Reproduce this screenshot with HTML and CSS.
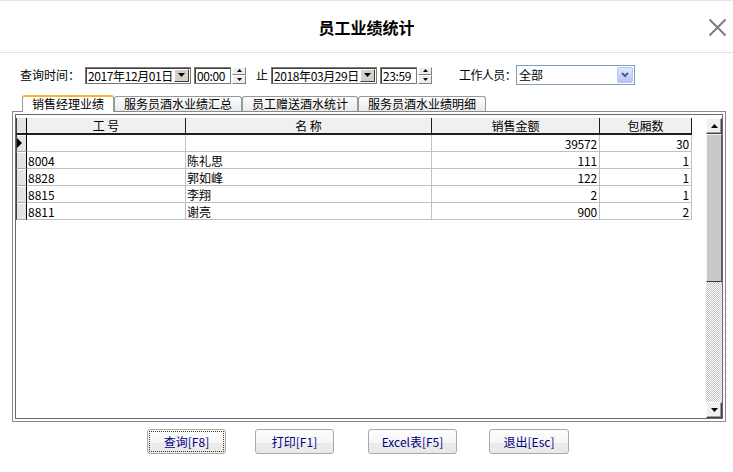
FILE: index.html
```html
<!DOCTYPE html>
<html lang="zh-CN">
<head>
<meta charset="utf-8">
<title>员工业绩统计</title>
<link rel="stylesheet" href="styles.css">
</head>
<body>
<div class="window">
  <header class="titlebar">
    <h1 class="title">员工业绩统计</h1>
    <span class="close" aria-label="关闭">
      <svg width="19" height="19" viewBox="0 0 19 19"><path d="M1.5 1.5 L17.5 17.5 M17.5 1.5 L1.5 17.5" stroke="#7d7d7d" stroke-width="2" fill="none"/></svg>
    </span>
  </header>

  <div class="query">
    <span class="label">查询时间：</span>
    <div class="datebox date-from">
      <span class="val">2017年12月01日</span>
      <span class="dd-btn"><svg width="7" height="4" viewBox="0 0 7 4"><path d="M0 0 H7 L3.5 4 Z" fill="#000"/></svg></span>
    </div>
    <div class="timebox"><span class="val">00:00</span></div>
    <div class="spin">
      <span class="half"><svg width="5" height="3" viewBox="0 0 5 3"><path d="M0 3 H5 L2.5 0 Z" fill="#000"/></svg></span>
      <span class="half"><svg width="5" height="3" viewBox="0 0 5 3"><path d="M0 0 H5 L2.5 3 Z" fill="#000"/></svg></span>
    </div>
    <span class="label to">止</span>
    <div class="datebox date-to">
      <span class="val">2018年03月29日</span>
      <span class="dd-btn"><svg width="7" height="4" viewBox="0 0 7 4"><path d="M0 0 H7 L3.5 4 Z" fill="#000"/></svg></span>
    </div>
    <div class="timebox"><span class="val">23:59</span></div>
    <div class="spin">
      <span class="half"><svg width="5" height="3" viewBox="0 0 5 3"><path d="M0 3 H5 L2.5 0 Z" fill="#000"/></svg></span>
      <span class="half"><svg width="5" height="3" viewBox="0 0 5 3"><path d="M0 0 H5 L2.5 3 Z" fill="#000"/></svg></span>
    </div>
    <span class="label staff">工作人员：</span>
    <div class="select">
      <span class="sel-val">全部</span>
      <span class="sel-btn"><svg width="8" height="6" viewBox="0 0 8 6"><path d="M1 1 L4 4 L7 1" stroke="#4d6185" stroke-width="2" fill="none"/></svg></span>
    </div>
  </div>

  <nav class="tabs">
    <span class="tab active">销售经理业绩</span>
    <span class="tab">服务员酒水业绩汇总</span>
    <span class="tab">员工赠送酒水统计</span>
    <span class="tab">服务员酒水业绩明细</span>
  </nav>

  <section class="panel">
    <div class="grid">
      <div class="table-wrap">
        <table class="data">
          <colgroup>
            <col class="c-ind"><col class="c-id"><col class="c-name"><col class="c-amt"><col class="c-room">
          </colgroup>
          <thead>
            <tr><th class="ind"></th><th>工 号</th><th>名 称</th><th>销售金额</th><th>包厢数</th></tr>
          </thead>
          <tbody>
            <tr><td class="ind cur"><svg width="5" height="10" viewBox="0 0 5 10"><path d="M0 0 L5 5 L0 10 Z" fill="#000"/></svg></td><td></td><td></td><td class="num">39572</td><td class="num">30</td></tr>
            <tr><td class="ind"></td><td>8004</td><td>陈礼思</td><td class="num">111</td><td class="num">1</td></tr>
            <tr><td class="ind"></td><td>8828</td><td>郭如峰</td><td class="num">122</td><td class="num">1</td></tr>
            <tr><td class="ind"></td><td>8815</td><td>李翔</td><td class="num">2</td><td class="num">1</td></tr>
            <tr><td class="ind"></td><td>8811</td><td>谢亮</td><td class="num">900</td><td class="num">2</td></tr>
          </tbody>
        </table>
      </div>
      <div class="scrollbar">
        <span class="sb-btn"><svg width="7" height="4" viewBox="0 0 7 4"><path d="M0 4 H7 L3.5 0 Z" fill="#000"/></svg></span>
        <span class="sb-thumb"></span>
        <span class="sb-track"></span>
        <span class="sb-btn"><svg width="7" height="4" viewBox="0 0 7 4"><path d="M0 0 H7 L3.5 4 Z" fill="#000"/></svg></span>
      </div>
    </div>
  </section>

  <div class="buttons">
    <button class="btn btn-query focused">查询[F8]</button>
    <button class="btn btn-print">打印[F1]</button>
    <button class="btn btn-excel">Excel表[F5]</button>
    <button class="btn btn-exit">退出[Esc]</button>
  </div>
</div>
</body>
</html>
```

FILE: styles.css
```css
* { box-sizing: border-box; }
html, body { margin: 0; padding: 0; }
body {
  width: 733px;
  height: 472px;
  overflow: hidden;
  background: #fff;
  color: #000;
  font: 12px/14px "Noto Sans CJK SC", "Liberation Sans", sans-serif;
}

/* title bar */
.titlebar {
  height: 53px;
  border-top: 1px solid #e6e6e6;
  border-bottom: 1px solid #e3e3e3;
  display: grid;
  grid-template-columns: 1fr auto 1fr;
  align-items: center;
}
.title {
  grid-column: 2;
  margin: 0;
  font-size: 16px;
  font-weight: bold;
  line-height: 20px;
}
.close {
  grid-column: 3;
  justify-self: end;
  width: 19px;
  height: 19px;
  margin-right: 6px;
  margin-top: 2px;
  display: block;
}
.close svg { display: block; }

/* query row */
.query {
  margin-top: 12px;
  height: 20px;
  padding-left: 20px;
  display: flex;
  align-items: center;
}
.label { line-height: 20px; white-space: nowrap; }
.label.to { margin-left: 10px; }
.label.staff { margin-left: 27px; letter-spacing: -0.6px; }

.datebox, .timebox {
  height: 17px;
  border: 1px solid #7a7a7a;
  box-shadow: inset 1px 1px 0 #404040;
  background: #fff;
  display: flex;
  align-items: center;
}
.datebox { width: 106px; margin-left: 3px; }
.date-from { margin-left: 5px; }
.datebox .val, .timebox .val {
  flex: 1;
  padding-left: 2px;
  line-height: 15px;
  letter-spacing: -0.4px;
  white-space: nowrap;
  overflow: hidden;
}
.dd-btn {
  width: 15px;
  height: 13px;
  margin-right: 1px;
  background: #d4d0c8;
  border: 1px solid;
  border-color: #fff #404040 #404040 #fff;
  display: flex;
  align-items: center;
  justify-content: center;
}
.dd-btn svg { display: block; }
.timebox { width: 37px; margin-left: 3px; }
.spin {
  width: 14px;
  height: 17px;
  margin-left: 1px;
  display: flex;
  flex-direction: column;
}
.spin .half {
  height: 8.5px;
  background: #ededed;
  border: 1px solid;
  border-color: #fff #808080 #808080 #fff;
  display: flex;
  align-items: center;
  justify-content: center;
}
.spin svg { display: block; }

.select {
  width: 119px;
  height: 20px;
  margin-left: 0;
  border: 1px solid #7f9db9;
  background: #fff;
  display: flex;
  align-items: center;
}
.sel-val { flex: 1; padding-left: 2px; line-height: 16px; }
.sel-btn {
  width: 16px;
  height: 16px;
  margin-right: 1px;
  border: 1px solid #b6c6ef;
  border-radius: 2px;
  background: linear-gradient(#e0e8fd, #b3c5f5);
  display: flex;
  align-items: center;
  justify-content: center;
}
.sel-btn svg { display: block; }

/* tabs */
.tabs {
  margin-top: 10px;
  margin-left: 22px;
  height: 16px;
  display: flex;
  align-items: flex-end;
}
.tab {
  height: 15px;
  padding: 0 9px;
  border: 1px solid #919b9c;
  border-bottom: none;
  border-radius: 3px 3px 0 0;
  background: linear-gradient(#fdfdfd, #eaeaea);
  line-height: 14px;
  white-space: nowrap;
}
.tab.active {
  height: 17px;
  margin-bottom: -1px;
  border-top: 2px solid #f6b52c;
  background: #fff;
  position: relative;
  z-index: 1;
}

/* panel + grid */
.panel {
  width: 714px;
  height: 311px;
  margin-left: 12px;
  border: 1px solid #8a8a8a;
  padding: 2px;
  background: #fff;
}
.grid {
  height: 100%;
  border: 1px solid #6a6a6a;
  display: flex;
}
.table-wrap { flex: 1; padding-top: 3px; }
.data {
  border-collapse: separate;
  border-spacing: 0;
  table-layout: fixed;
  width: 676px;
}
.c-ind { width: 11px; }
.c-id { width: 159px; }
.c-name { width: 246px; }
.c-amt { width: 168px; }
.c-room { width: 92px; }
.data th {
  height: 17px;
  padding: 0;
  background: #f0f0f0;
  border-right: 1px solid #1e1e1e;
  border-bottom: 2px solid #1e1e1e;
  font-weight: normal;
  text-align: center;
  line-height: 14px;
  white-space: nowrap;
}
.data td {
  height: 17px;
  padding: 0 1px;
  border-right: 1px solid #c0c0c0;
  border-bottom: 1px solid #c0c0c0;
  line-height: 15px;
  white-space: nowrap;
  overflow: hidden;
}
.data td.num { text-align: right; padding-right: 2px; letter-spacing: -0.2px; }
.data th.ind, .data td.ind {
  padding: 0;
  background: #e4e4e4;
  border-left: 1px solid #404040;
  border-right: 1px solid #000;
}
.data td.ind {
  border-bottom: 1px solid #a8a8a8;
  box-shadow: inset 0 1px 0 #fff;
}
.data td.ind svg { display: block; margin-left: 0; }

.scrollbar {
  width: 16px;
  margin-top: 3px;
  display: flex;
  flex-direction: column;
}
.sb-btn {
  height: 16px;
  background: #efefef;
  border: 1px solid;
  border-color: #fff #404040 #404040 #fff;
  box-shadow: inset -1px -1px 0 #a0a0a0;
  display: flex;
  align-items: center;
  justify-content: center;
}
.sb-btn svg { display: block; }
.sb-thumb {
  height: 148px;
  background: #c9c9c9;
  border: 1px solid;
  border-color: #f4f4f4 #5a5a5a #3a3a3a #f4f4f4;
}
.sb-track {
  flex: 1;
  background: repeating-conic-gradient(#c4c4c4 0 25%, #fff 0 50%) 0 0 / 2px 2px;
}

/* buttons */
.buttons {
  margin-top: 7px;
  height: 25px;
  display: flex;
}
.btn {
  height: 25px;
  padding: 0;
  border: 1px solid #a9a9a9;
  border-radius: 3px;
  background: linear-gradient(#fdfdfd 0, #f7f7f7 55%, #ebebeb 55%, #e9e9e9 100%);
  color: #000080;
  font: inherit;
  line-height: 22px;
  text-align: center;
  white-space: nowrap;
}
.btn.focused { outline: 1px dotted #4a3a00; outline-offset: -3px; }
.btn-query { width: 79px; margin-left: 147px; }
.btn-print { width: 79px; margin-left: 29px; }
.btn-excel { width: 89px; margin-left: 34px; }
.btn-exit { width: 80px; margin-left: 32px; }
```
